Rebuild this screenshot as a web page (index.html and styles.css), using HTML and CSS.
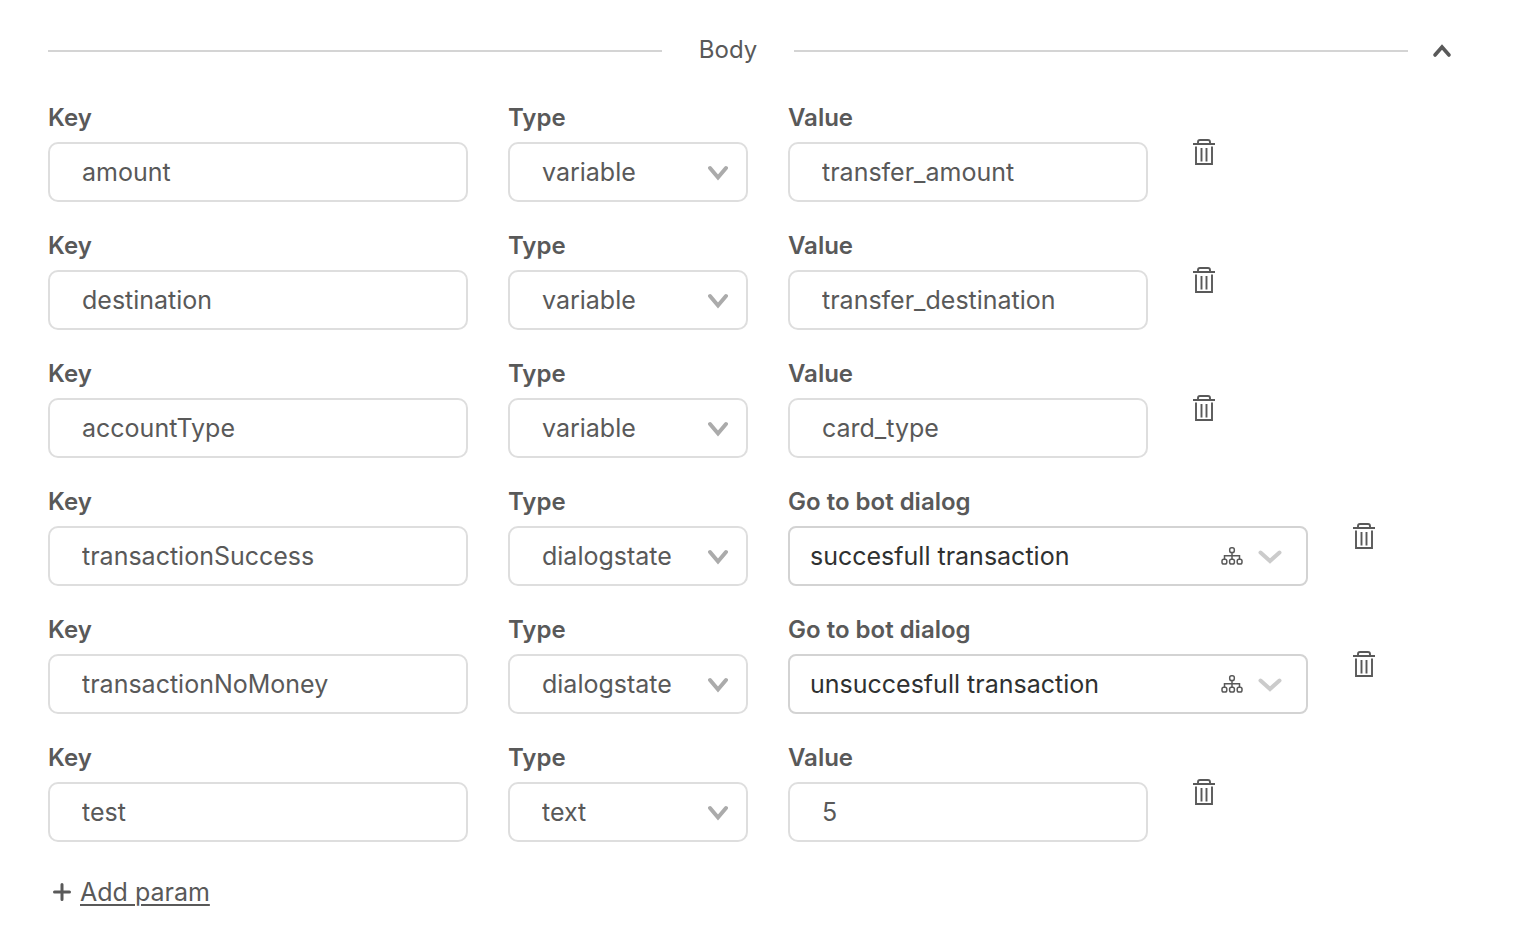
FILE: index.html
```
<!DOCTYPE html>
<html lang="en">
<head>
<meta charset="utf-8">
<title>Body parameters</title>
<link rel="stylesheet" href="styles.css">
</head>
<body>
<svg class="sprite" aria-hidden="true">
  <symbol id="trash" viewBox="0 0 22 28">
    <path d="M0 6H22M5 6V4Q5 2 7 2H15Q17 2 17 4V6M3 8.500V26H19V8.500M8.500 10V23.500M13.500 10V23.500" fill="none" stroke="currentColor" stroke-width="1.900"/>
  </symbol>
  <symbol id="down" viewBox="0 0 20 16">
    <path d="M2 3L10 12.500L18 3" fill="none" stroke="currentColor" stroke-width="4" stroke-linecap="round"/>
  </symbol>
  <symbol id="wide-down" viewBox="0 0 24 16">
    <path d="M2.500 4.500L12 13L21.500 4.500" fill="none" stroke="currentColor" stroke-width="4" stroke-linecap="round"/>
  </symbol>
  <symbol id="tree" viewBox="0 0 22 20">
    <path d="M11 6.500V13M3.500 13V9.800H18.500V13" fill="none" stroke="currentColor" stroke-width="1.500"/>
    <g fill="none" stroke="currentColor" stroke-width="1.500"><rect x="8.700" y="1.700" width="4.600" height="4.800" rx="1.800"/><rect x="1" y="13.300" width="4.800" height="4.800" rx="1.800"/><rect x="8.600" y="13.300" width="4.800" height="4.800" rx="1.800"/><rect x="16.200" y="13.300" width="4.800" height="4.800" rx="1.800"/></g>
  </symbol>
</svg>
<main class="panel">
  <header class="heading">
    <span class="rule"></span>
    <h2 class="title">Body</h2>
    <span class="rule"></span>
    <button class="collapse" type="button" aria-label="Collapse"><svg width="20" height="16" viewBox="0 0 20 16"><path d="M3 13L10 5L17 13" fill="none" stroke="currentColor" stroke-width="3.600" stroke-linecap="round"/></svg></button>
  </header>
  <form class="params">
    <div class="row">
      <div class="field"><label for="k1">Key</label><input id="k1" class="control" type="text" value="amount"></div>
      <div class="field"><label for="t1">Type</label><div class="select"><select id="t1" class="control"><option>variable</option></select><svg class="arrow"><use href="#down"/></svg></div></div>
      <div class="field"><label for="v1">Value</label><input id="v1" class="control" type="text" value="transfer_amount"></div>
      <button class="remove" type="button" aria-label="Delete"><svg class="trash"><use href="#trash"/></svg></button>
    </div>
    <div class="row">
      <div class="field"><label for="k2">Key</label><input id="k2" class="control" type="text" value="destination"></div>
      <div class="field"><label for="t2">Type</label><div class="select"><select id="t2" class="control"><option>variable</option></select><svg class="arrow"><use href="#down"/></svg></div></div>
      <div class="field"><label for="v2">Value</label><input id="v2" class="control" type="text" value="transfer_destination"></div>
      <button class="remove" type="button" aria-label="Delete"><svg class="trash"><use href="#trash"/></svg></button>
    </div>
    <div class="row">
      <div class="field"><label for="k3">Key</label><input id="k3" class="control" type="text" value="accountType"></div>
      <div class="field"><label for="t3">Type</label><div class="select"><select id="t3" class="control"><option>variable</option></select><svg class="arrow"><use href="#down"/></svg></div></div>
      <div class="field"><label for="v3">Value</label><input id="v3" class="control" type="text" value="card_type"></div>
      <button class="remove" type="button" aria-label="Delete"><svg class="trash"><use href="#trash"/></svg></button>
    </div>
    <div class="row row-dialog">
      <div class="field"><label for="k4">Key</label><input id="k4" class="control" type="text" value="transactionSuccess"></div>
      <div class="field"><label for="t4">Type</label><div class="select"><select id="t4" class="control"><option>dialogstate</option></select><svg class="arrow"><use href="#down"/></svg></div></div>
      <div class="field"><label for="v4">Go to bot dialog</label><div class="select"><select id="v4" class="control dialog"><option>succesfull transaction</option></select><span class="marks"><svg class="tree"><use href="#tree"/></svg><svg class="wide"><use href="#wide-down"/></svg></span></div></div>
      <button class="remove" type="button" aria-label="Delete"><svg class="trash"><use href="#trash"/></svg></button>
    </div>
    <div class="row row-dialog">
      <div class="field"><label for="k5">Key</label><input id="k5" class="control" type="text" value="transactionNoMoney"></div>
      <div class="field"><label for="t5">Type</label><div class="select"><select id="t5" class="control"><option>dialogstate</option></select><svg class="arrow"><use href="#down"/></svg></div></div>
      <div class="field"><label for="v5">Go to bot dialog</label><div class="select"><select id="v5" class="control dialog"><option>unsuccesfull transaction</option></select><span class="marks"><svg class="tree"><use href="#tree"/></svg><svg class="wide"><use href="#wide-down"/></svg></span></div></div>
      <button class="remove" type="button" aria-label="Delete"><svg class="trash"><use href="#trash"/></svg></button>
    </div>
    <div class="row">
      <div class="field"><label for="k6">Key</label><input id="k6" class="control" type="text" value="test"></div>
      <div class="field"><label for="t6">Type</label><div class="select"><select id="t6" class="control"><option>text</option></select><svg class="arrow"><use href="#down"/></svg></div></div>
      <div class="field"><label for="v6">Value</label><input id="v6" class="control" type="text" value="5"></div>
      <button class="remove" type="button" aria-label="Delete"><svg class="trash"><use href="#trash"/></svg></button>
    </div>
  </form>
  <button class="add" type="button"><svg width="18" height="18" viewBox="0 0 18 18" aria-hidden="true"><path d="M9 1.500V16.500M1.500 9H16.500" stroke="currentColor" stroke-width="3" stroke-linecap="round"/></svg><span class="add-text">Add param</span></button>
</main>
</body>
</html>
```
FILE: styles.css
```
* { box-sizing: border-box; }
body {
  margin: 0;
  background: #fff;
  color: #595959;
  font: 25px/28px Inter, "Open Sans", sans-serif;
}
svg { display: block; flex: none; }
button {
  padding: 0;
  border: 0;
  background: none;
  color: inherit;
  font: inherit;
  cursor: pointer;
}
.sprite { position: absolute; width: 0; height: 0; }
.panel { padding: 36px 48px 40px; }
.heading { display: flex; align-items: center; }
.rule { flex: 1; height: 2px; margin-top: 1px; background: #d4d4d4; }
.title { margin: 0 37px; font-size: 24px; font-weight: 400; }
.collapse {
  display: flex;
  justify-content: center;
  width: 36px;
  margin: 0 12px 0 16px;
}
.params { display: grid; gap: 30px; margin-top: 40px; }
.row {
  display: grid;
  grid-template-columns: 420fr 240fr 360fr 284fr;
  gap: 40px;
}
.row-dialog { grid-template-columns: 420fr 240fr 520fr 124fr; }
.field { display: grid; gap: 10px; min-width: 0; }
label { font-size: 24px; font-weight: 600; }
.control {
  display: block;
  width: 100%;
  height: 60px;
  margin: 0;
  padding: 0 32px;
  border: 2px solid #dedede;
  border-radius: 10px;
  background: #fff;
  color: #595959;
  font: inherit;
  appearance: none;
}
.select { position: relative; }
.select .control { padding-right: 60px; }
.select .dialog {
  padding: 0 96px 0 20px;
  border-color: #d3d3d3;
  border-radius: 8px;
  color: #2f3131;
}
.arrow {
  position: absolute;
  top: 23px;
  right: 20px;
  width: 20px;
  height: 16px;
  color: #ababab;
  pointer-events: none;
}
.marks {
  position: absolute;
  top: 0;
  right: 26px;
  display: flex;
  align-items: center;
  gap: 15px;
  height: 60px;
  pointer-events: none;
}
.tree { width: 22px; height: 20px; }
.wide { width: 24px; height: 16px; color: #cbcbcb; }
.remove {
  justify-self: start;
  align-self: start;
  margin-top: 34px;
  padding-left: 5px;
}
.trash { width: 22px; height: 28px; }
.add {
  display: flex;
  align-items: center;
  gap: 9px;
  margin: 36px 0 0 5px;
}
.add-text { text-decoration: underline; text-decoration-thickness: 2px; text-underline-offset: 3px; }
```
